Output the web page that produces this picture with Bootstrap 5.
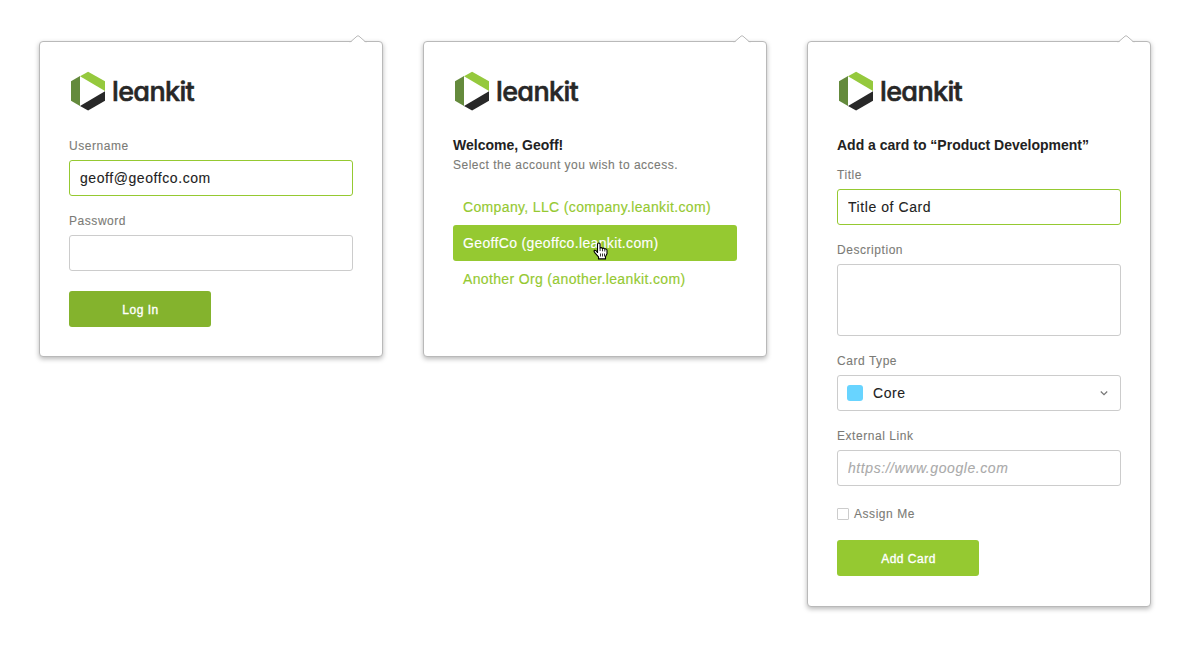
<!DOCTYPE html>
<html lang="en">
<head>
<meta charset="utf-8">
<meta name="viewport" content="width=device-width, initial-scale=1">
<title>LeanKit</title>
<link href="https://cdn.jsdelivr.net/npm/bootstrap@5.3.0/dist/css/bootstrap.min.css" rel="stylesheet">
<style>
  body { font-family: "Liberation Sans", Arial, sans-serif; color: #222; background: #fff; }
  .stage { padding: 41px 0 30px 39px; gap: 40px; }
  .popup { width: 344px; padding: 29px; border: 1px solid #b9b9b9; border-radius: 4px; box-shadow: 0 2px 5px rgba(0,0,0,.28); }
  .popup-short { height: 316px; }
  .popup-tall { padding-bottom: 30px; }
  .popup-tip { position: absolute; top: -7px; right: 15.5px; }
  .brand { height: 40px; margin-bottom: 25px; }
  .wordmark { font: 500 27px/40px Inter, sans-serif; font-feature-settings: "cv11"; letter-spacing: -.65px; margin-left: 7px; padding-top: 2px; color: #272727; -webkit-text-stroke: .6px #272727; }
  .form-label { display: block; font-size: 12px; line-height: 20px; letter-spacing: .55px; color: #7b7b76; margin-bottom: 4px; -webkit-text-stroke: .1px currentColor; }
  .field { margin-bottom: 15px; }
  .form-control, .picker { height: 36px; padding: 0 10px; border: 1px solid #ccc; border-radius: 3px; font-size: 14px; line-height: 34px; letter-spacing: .57px; color: #222; background: #fff; -webkit-text-stroke: .1px currentColor; }
  .form-control.active, .form-control:focus { border-color: #95c931; box-shadow: none; }
  .picker { padding-left: 9px; }
  textarea.form-control { height: 72px; min-height: 0; resize: none; display: block; }
  .form-control::placeholder { color: #aaa; font-style: italic; }
  .btn-go { width: 142px; height: 36px; margin-top: 20px; padding: 2px 0 0 1px; border: 0; border-radius: 3px; background: #95c931; color: #fff; font-size: 12px; letter-spacing: .5px; -webkit-text-stroke: .35px #fff; }
  .btn-go.pressed { background: #84b32d; }
  .heading { font-size: 14px; line-height: 20px; font-weight: 700; margin: -1px 0 0; }
  .heading-form { margin-bottom: 10px; }
  .lede { font-size: 12px; line-height: 20px; letter-spacing: .5px; color: #7b7b76; margin: 0 0 14px; -webkit-text-stroke: .1px currentColor; }
  .account { height: 36px; line-height: 36px; padding: 0 10px; border: 0; border-radius: 3px; font-size: 14px; letter-spacing: .35px; color: #95c931; background: transparent; -webkit-text-stroke: .15px currentColor; }
  .list-group-item.account.active { background: #95c931; color: #fff; margin: 0; border-radius: 3px; }
  .hand { position: absolute; left: 140px; top: 17px; }
  .swatch { width: 16px; height: 16px; border-radius: 3px; background: #68d4ff; margin-right: 10px; }
  .form-check-input.tick { width: 12px; height: 12px; margin: 0 5px 0 0; border: 1px solid #ccc; border-radius: 1px; }
  .check-row { height: 20px; margin-top: 18px; margin-bottom: -4px; }
</style>
</head>
<body>
<svg width="0" height="0" class="position-absolute" aria-hidden="true">
  <symbol id="mark" viewBox="0 0 36 40">
    <path fill="#648a3c" d="M0 10.3 9 5.1V35L0 29.8z"/>
    <path fill="#95c93d" d="M9 5.3 17.1.7 34 10.3V20z"/>
    <path fill="#282828" d="M34 20.3v9.5L17.1 39.5 9 34.9z"/>
  </symbol>
  <symbol id="tip" viewBox="0 0 18 8">
    <path fill="#fff" d="M1 8 8 1.2q1-.9 2 0L17 8z"/>
    <path fill="none" stroke="#b9b9b9" d="M.5 6.8Q1.7 6.8 2.5 6L8 1.2q1-.9 2 0L15.500 6q.8.8 2 .8"/>
  </symbol>
</svg>
<main class="stage d-flex align-items-start">
  <section class="popup popup-short bg-white position-relative flex-shrink-0">
    <svg class="popup-tip" width="18" height="8"><use href="#tip"/></svg>
    <div class="brand d-flex align-items-center"><svg width="36" height="40"><use href="#mark" x="2" width="36" height="40"/></svg><span class="wordmark">leankit</span></div>
    <form>
      <div class="field"><label class="form-label" for="user">Username</label><input id="user" class="form-control active" value="geoff@geoffco.com"></div>
      <div class="field"><label class="form-label" for="pass">Password</label><input id="pass" type="password" class="form-control"></div>
      <button type="button" class="btn btn-go pressed d-block">Log In</button>
    </form>
  </section>

  <section class="popup popup-short bg-white position-relative flex-shrink-0">
    <svg class="popup-tip" width="18" height="8"><use href="#tip"/></svg>
    <div class="brand d-flex align-items-center"><svg width="36" height="40"><use href="#mark" x="2" width="36" height="40"/></svg><span class="wordmark">leankit</span></div>
    <h1 class="heading">Welcome, Geoff!</h1>
    <p class="lede">Select the account you wish to access.</p>
    <div class="list-group">
      <a class="list-group-item account">Company, LLC (company.leankit.com)</a>
      <a class="list-group-item account active">GeoffCo (geoffco.leankit.com)
        <svg class="hand" width="15" height="18" viewBox="0 0 15 18"><path fill="#fff" stroke="#000" stroke-width="1.1" stroke-linejoin="round" d="M4.500 11V2.500q0-1.500 1.300-1.500T7.100 2.500V6q1.300-.8 2.300.4 1.300-.7 2.300.6 2.300-.5 2.300 1.500v3.200l-1.500 3v2.200H5.500v-2L2 10.900Q.5 9 1.500 8.300q1-.6 3 2"/><path stroke="#000" stroke-width=".8" d="M7.100 6v3M9.500 6.500v2.800M11.800 7.200v2.300M7.500 11.500v3M9.500 11.500v3M11.500 11.500v3"/></svg>
      </a>
      <a class="list-group-item account">Another Org (another.leankit.com)</a>
    </div>
  </section>

  <section class="popup popup-tall bg-white position-relative flex-shrink-0">
    <svg class="popup-tip" width="18" height="8"><use href="#tip"/></svg>
    <div class="brand d-flex align-items-center"><svg width="36" height="40"><use href="#mark" x="2" width="36" height="40"/></svg><span class="wordmark">leankit</span></div>
    <h1 class="heading heading-form">Add a card to “Product Development”</h1>
    <form>
      <div class="field"><label class="form-label" for="title">Title</label><input id="title" class="form-control active" value="Title of Card"></div>
      <div class="field"><label class="form-label" for="desc">Description</label><textarea id="desc" class="form-control"></textarea></div>
      <div class="field"><span class="form-label">Card Type</span>
        <div class="picker d-flex align-items-center"><span class="swatch"></span><span>Core</span>
          <svg class="ms-auto" width="12" height="8" viewBox="0 0 12 8"><path fill="none" stroke="#777" stroke-width="1.200" d="M2.800 2.500 6 5.700 9.200 2.500"/></svg></div></div>
      <div class="field"><label class="form-label" for="link">External Link</label><input id="link" class="form-control" placeholder="https://www.google.com"></div>
      <div class="check-row d-flex align-items-center"><input id="me" type="checkbox" class="form-check-input tick"><label class="form-label mb-0" for="me">Assign Me</label></div>
      <button type="button" class="btn btn-go d-block">Add Card</button>
    </form>
  </section>
</main>
<script src="https://cdn.jsdelivr.net/npm/bootstrap@5.3.0/dist/js/bootstrap.bundle.min.js"></script>
</body>
</html>
